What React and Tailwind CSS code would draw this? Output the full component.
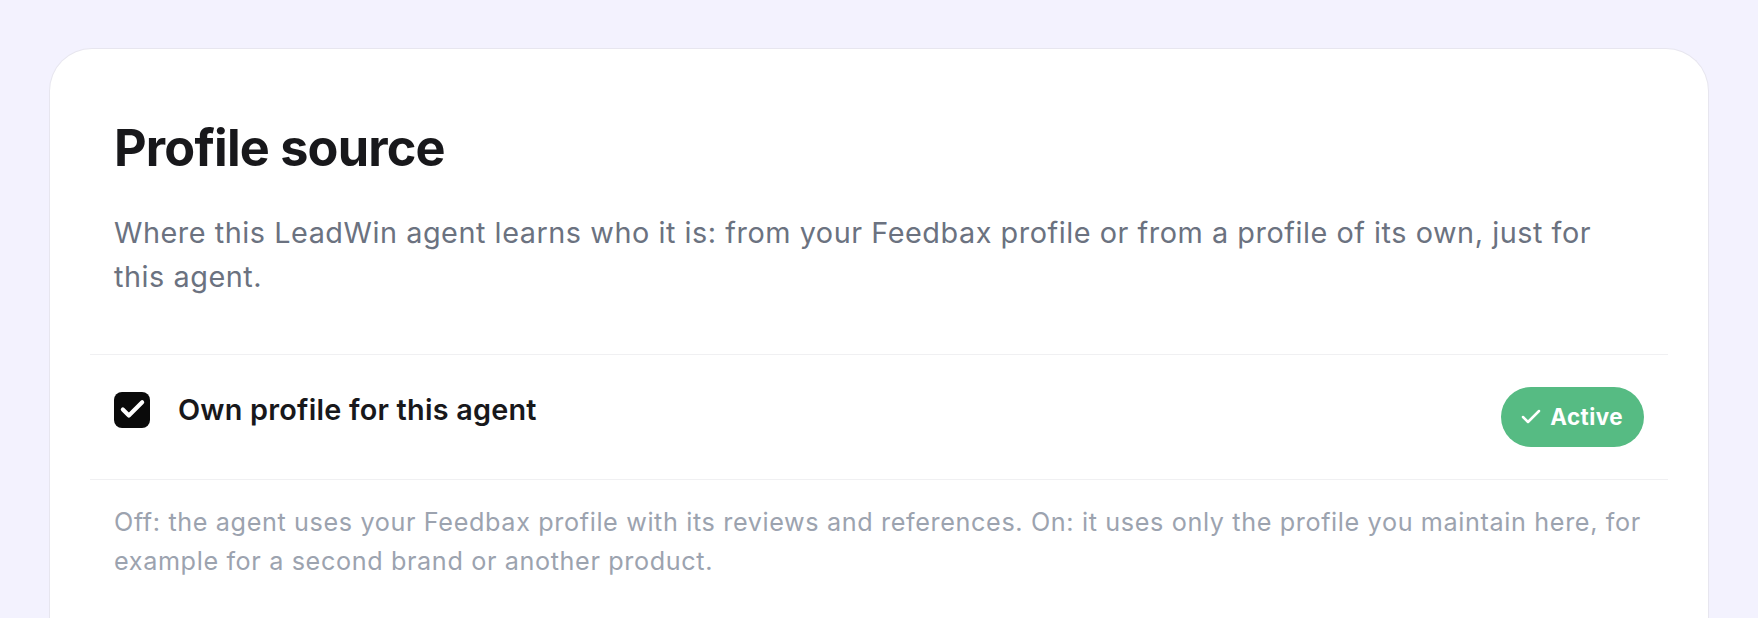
import { Check } from "lucide-react";

export default function App() {
    return (
        <div className="min-h-screen bg-[#f3f2fe] px-[49px] pt-[48px] font-['Inter',sans-serif]">
            <div className="rounded-t-[43px] border border-b-0 border-[#e7e6ef] bg-white px-[40px] pt-[74px] pb-[60px]">
                <div className="px-[24px]">
                    <h2 className="text-[50.4px] font-bold leading-none tracking-[-0.016em] text-[#18181b]">
                        Profile source
                    </h2>
                    <p className="mt-[38px] text-[28.8px] leading-[43.8px] tracking-[0.019em] text-[#6b7280]">
                        Where this LeadWin agent learns who it is: from your
                        Feedbax profile or from a profile of its own, just for
                        this agent.
                    </p>
                </div>

                <div className="mt-[55px] border-y border-[#f0f0f2] px-[24px] py-[32px]">
                    <div className="flex items-start justify-between">
                        <label className="mt-[1px] flex items-center gap-[28px]">
                            <span className="flex h-[36px] w-[36px] items-center justify-center rounded-[8px] bg-[#0a0a0a]">
                                <Check size={29} strokeWidth={3.4} color="#ffffff" />
                            </span>
                            <span className="text-[28.8px] font-semibold leading-[43.2px] tracking-[0.008em] text-[#18181b]">
                                Own profile for this agent
                            </span>
                        </label>
                        <span className="flex h-[60px] items-center gap-[7px] rounded-full bg-[#56bb83] pl-[18px] pr-[21px] text-[22.4px] font-bold tracking-[0.02em] text-white">
                            <Check size={24} strokeWidth={2.5} />
                            Active
                        </span>
                    </div>
                </div>

                <p className="mt-[23px] px-[24px] text-[25.2px] leading-[39px] tracking-[0.025em] text-[#9ca3af]">
                    Off: the agent uses your Feedbax profile with its reviews and
                    references. On: it uses only the profile you maintain here,
                    for example for a second brand or another product.
                </p>
            </div>
        </div>
    );
}
